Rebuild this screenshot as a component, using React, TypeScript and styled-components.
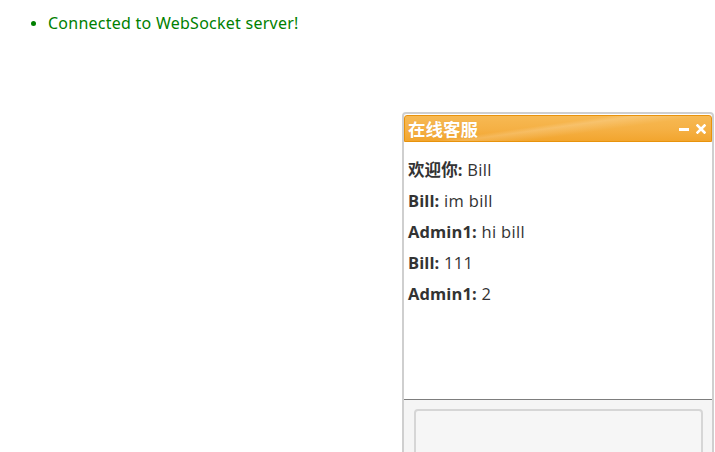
import React from "react";
import styled, { createGlobalStyle } from "styled-components";

const Global = createGlobalStyle`
  html, body { margin: 0; padding: 0; background: #fff; }
  body { margin: 8px; font-family: "Open Sans", "Noto Sans CJK SC", sans-serif; }
`;

const StatusList = styled.ul`
  margin: 4px 0 0;
  padding-left: 40px;
  font-family: "Noto Sans", "Noto Sans CJK SC", sans-serif;
  font-size: 16px;
  line-height: 22px;
  letter-spacing: 0.25px;
`;

const StatusItem = styled.li`
  color: #008000;
  &::marker { font-size: 14px; }
`;

const ChatWindow = styled.section`
  position: fixed;
  left: 402px;
  top: 112px;
  width: 308px;
  height: 380px;
  border: 2px solid #cfcfcf;
  border-radius: 4px;
  background: #fff;
  display: flex;
  flex-direction: column;
  overflow: hidden;
`;

const Header = styled.header`
  flex-shrink: 0;
  height: 27px;
  margin: 1px 0 0;
  box-sizing: border-box;
  border: 1px solid #e8930c;
  border-radius: 3px 3px 0 0;
  background:
    linear-gradient(172deg, rgba(255,255,255,0) 0 42%, rgba(255,255,255,0.18) 48%, rgba(255,255,255,0) 62%),
    linear-gradient(180deg, #f7b953 0%, #f5b044 55%, #f2a52e 100%);
  display: flex;
  align-items: center;
  justify-content: space-between;
  padding: 0 5px 0 3px;
`;

const Title = styled.h2`
  margin: 0;
  color: #fff;
  font-family: "Noto Sans CJK SC", sans-serif;
  font-size: 17.5px;
  font-weight: 700;
  line-height: 27px;
  text-shadow: 0 0 1px rgba(180, 100, 0, 0.3);
`;

const Controls = styled.div`
  display: flex;
  align-items: center;
  gap: 6px;
`;

const ControlButton = styled.button`
  border: 0;
  padding: 0;
  background: transparent;
  width: 11px;
  height: 11px;
  display: flex;
  align-items: center;
  justify-content: center;
  cursor: pointer;
`;

const Messages = styled.div`
  flex-shrink: 0;
  height: 257px;
  padding: 12px 4px 0;
  box-sizing: border-box;
  color: #333;
  font-size: 16.5px;
  letter-spacing: 0.35px;
`;

const Message = styled.p`
  margin: 0;
  line-height: 31px;
  white-space: nowrap;
`;

const Sender = styled.strong`
  font-weight: 700;
  letter-spacing: 0.1px;
`;

const InputArea = styled.div`
  flex: 1;
  border-top: 1px solid #7d7d7d;
  background: #f5f5f5;
  padding: 9px 9px 0 10px;
`;

const TextBox = styled.textarea`
  display: block;
  width: 100%;
  height: 80px;
  box-sizing: border-box;
  border: 2px solid #d6d6d6;
  border-radius: 4px;
  background: #f6f6f6;
  resize: none;
  outline: none;
`;

const messages: { from: string; text: string }[] = [
  { from: "欢迎你", text: "Bill" },
  { from: "Bill", text: "im bill" },
  { from: "Admin1", text: "hi bill" },
  { from: "Bill", text: "111" },
  { from: "Admin1", text: "2" },
];

export default function App() {
  return (
    <>
      <Global />
      <StatusList>
        <StatusItem>Connected to WebSocket server!</StatusItem>
      </StatusList>
      <ChatWindow>
        <Header>
          <Title>在线客服</Title>
          <Controls>
            <ControlButton aria-label="minimize">
              <svg width="10" height="10" viewBox="0 0 10 10">
                <rect x="0" y="4" width="10" height="3" fill="#fff" />
              </svg>
            </ControlButton>
            <ControlButton aria-label="close">
              <svg width="10" height="10" viewBox="0 0 10 10">
                <path d="M1.5 1.5 L8.5 8.5 M8.5 1.5 L1.5 8.5" stroke="#fff" strokeWidth="2.6" strokeLinecap="square" />
              </svg>
            </ControlButton>
          </Controls>
        </Header>
        <Messages>
          {messages.map((m, i) => (
            <Message key={i}>
              <Sender>{m.from}:</Sender> {m.text}
            </Message>
          ))}
        </Messages>
        <InputArea>
          <TextBox />
        </InputArea>
      </ChatWindow>
    </>
  );
}
